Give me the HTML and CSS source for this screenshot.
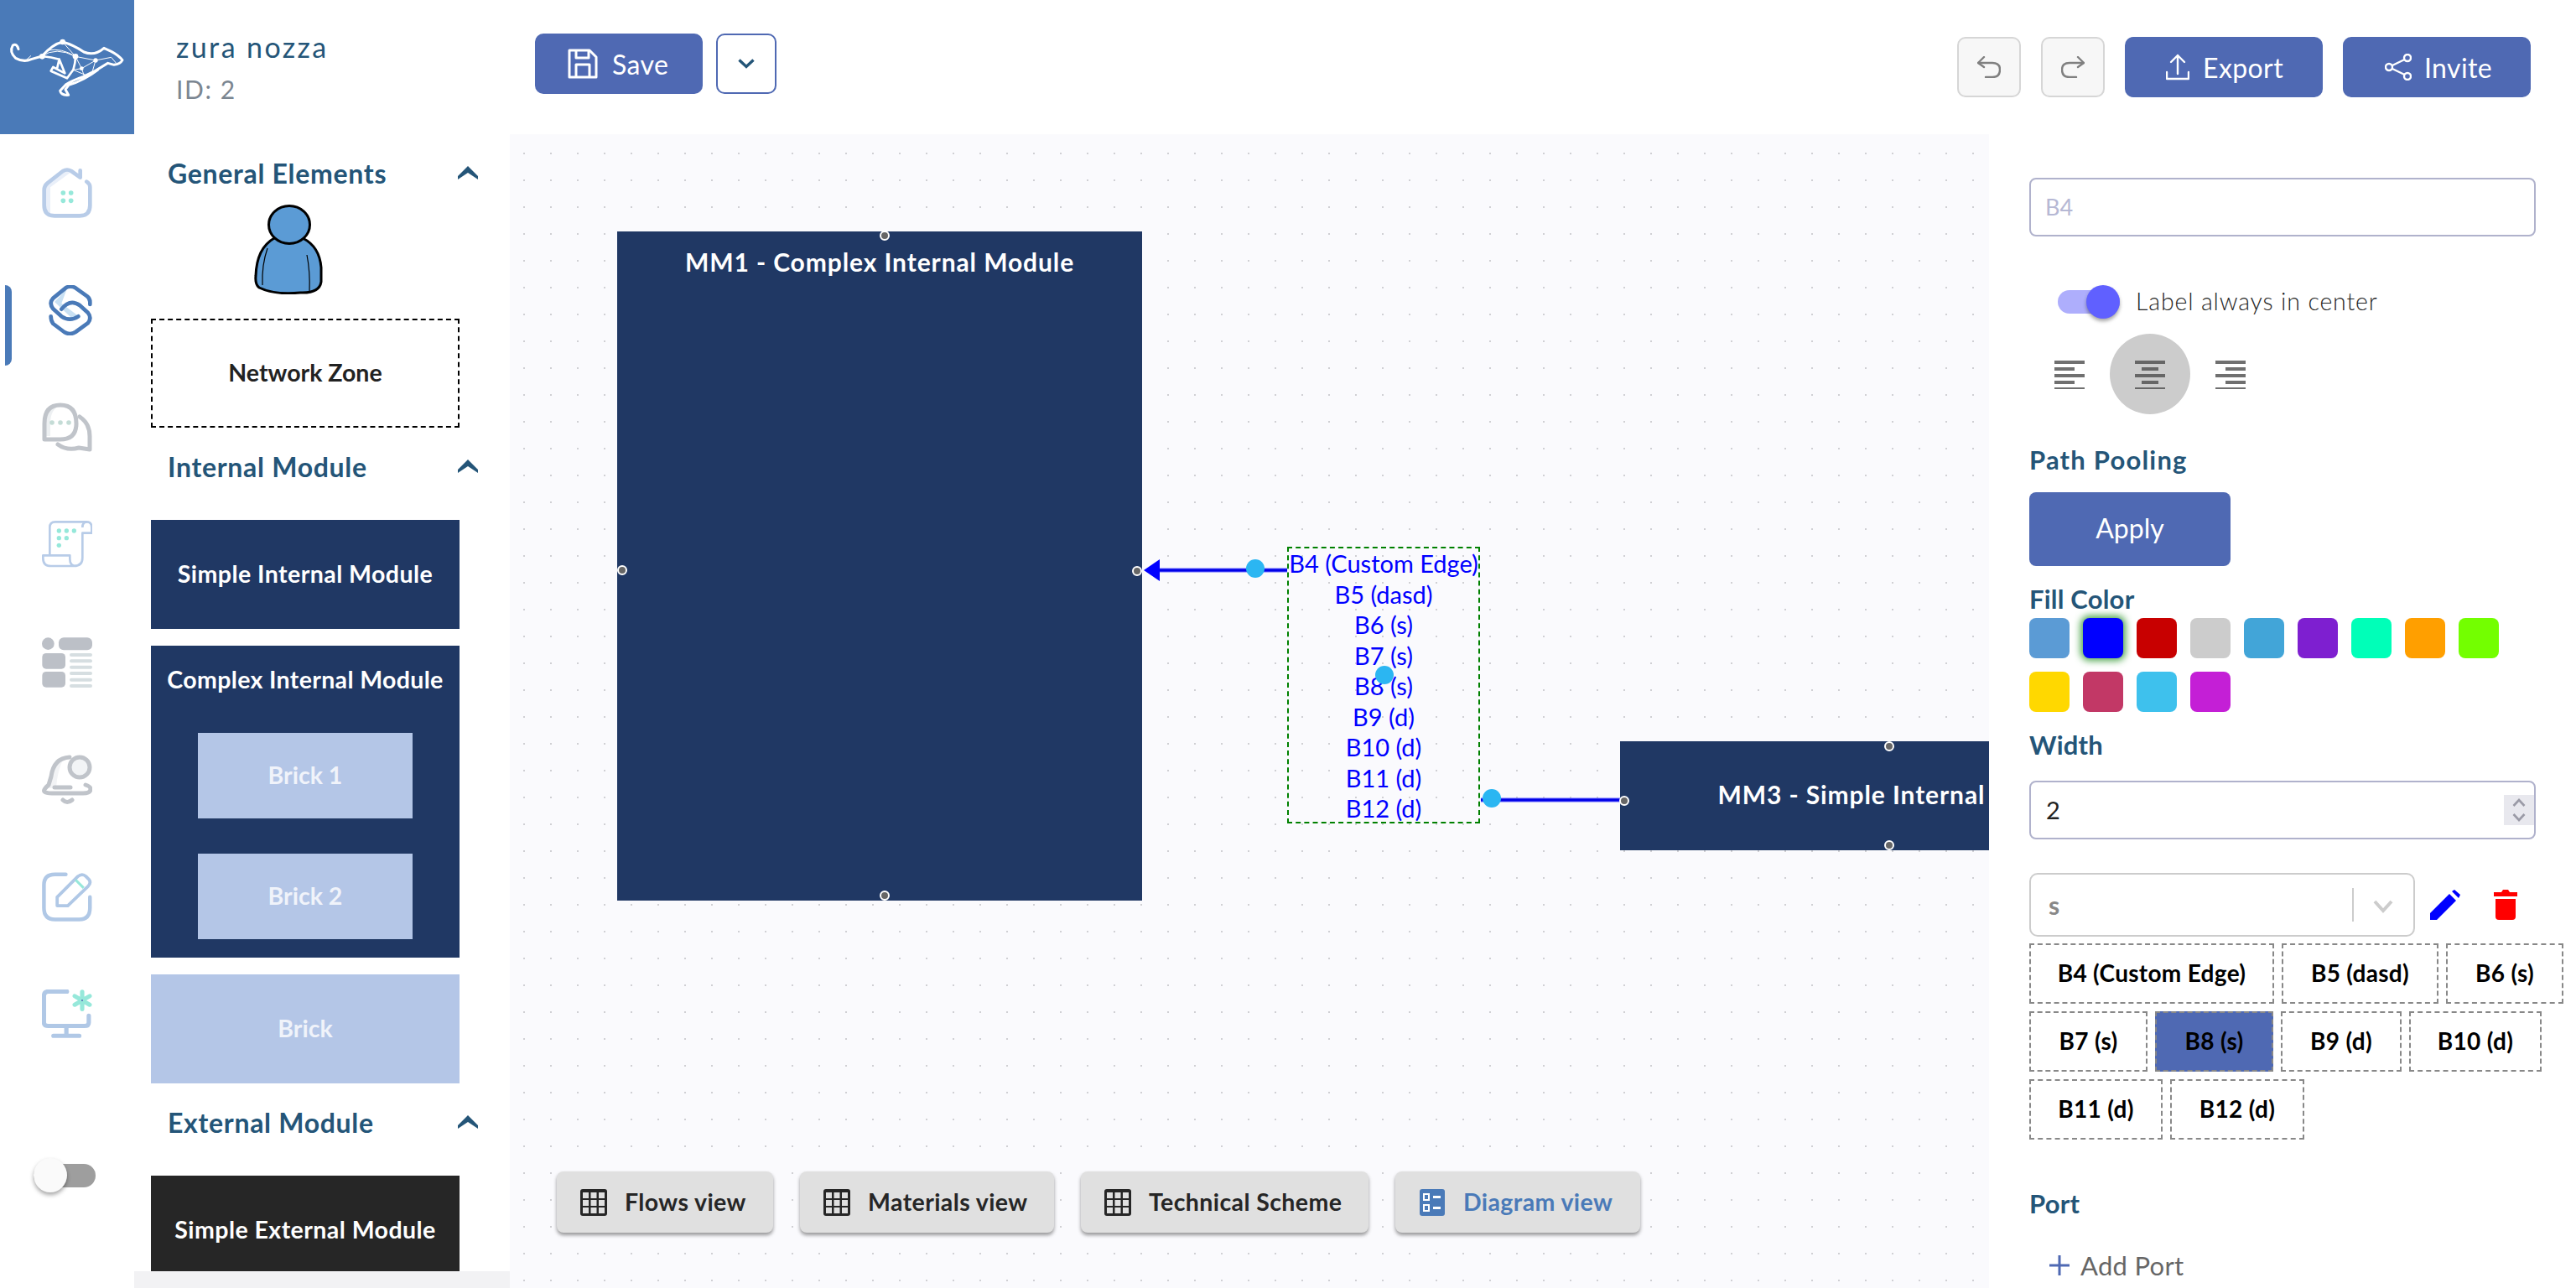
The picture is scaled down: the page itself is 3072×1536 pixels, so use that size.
FILE: index.html
```html
<!DOCTYPE html>
<html lang="en">
<head>
<meta charset="utf-8">
<title>Diagram editor</title>
<link rel="stylesheet" href="styles.css">
</head>
<body>
<div class="app">
  <div class="logo">
    <svg class="logo-svg" viewBox="0 0 480 480" fill="none" stroke="#fff" stroke-linecap="round" stroke-linejoin="round">
      <path stroke-width="9" d="M66 176Q60 154 46 162Q32 186 56 208Q84 224 112 212L150 201Q188 158 224 150Q262 160 300 186Q338 202 372 172L398 184Q425 198 438 215Q430 230 408 232L386 226Q345 254 298 274Q258 288 236 302L215 325Q218 342 245 340L234 320L246 304Q300 288 350 250"/>
      <path stroke-width="8" d="M150 201Q185 205 212 212L232 262L190 240L182 254L240 280L262 250Q270 225 270 202M212 212L205 242"/>
      <path stroke-width="3" d="M150 201Q200 165 270 202L342 216L292 245L270 202L224 150M342 216L398 205L415 225M292 245L262 250L310 270M292 245L300 268M342 216L330 258M110 200L90 218M172 180Q220 170 270 202"/>
      <g fill="#fff" stroke="none"><circle cx="224" cy="150" r="10"/><circle cx="151" cy="202" r="10"/><circle cx="270" cy="202" r="10"/><circle cx="342" cy="216" r="8"/><circle cx="292" cy="245" r="7"/></g>
    </svg>
  </div>

  <header class="topbar">
    <div class="user">
      <div class="user-name">zura nozza</div>
      <div class="user-id">ID: 2</div>
    </div>
    <div class="save-group">
      <button class="btn btn-save">
        <svg class="ic-save" viewBox="0 0 36 36" fill="none" stroke="#fff" stroke-width="3" stroke-linejoin="round"><path d="M2 2H26L34 10V34H2Z"/><path d="M10 2V11H25V2"/><path d="M10 34V19H26V34"/></svg>
        <span>Save</span>
      </button>
      <button class="btn-more">
        <svg class="ic-down" viewBox="0 0 20 12" fill="none" stroke="#245578" stroke-width="3.4"><path d="M1.5 1.5L10 9.5L18.5 1.5"/></svg>
      </button>
    </div>
    <div class="actions">
      <button class="btn-hist"><svg class="ic-hist" viewBox="0 0 28 26" fill="none" stroke="#808080" stroke-width="2.4" stroke-linecap="round" stroke-linejoin="round"><path d="M8 1L1 8L8 13"/><path d="M1 8H18Q27 8 27 16Q27 25 18 25H10"/></svg></button>
      <button class="btn-hist"><svg class="ic-hist" viewBox="0 0 28 26" fill="none" stroke="#808080" stroke-width="2.4" stroke-linecap="round" stroke-linejoin="round"><path d="M20 1L27 8L20 13"/><path d="M27 8H10Q1 8 1 16Q1 25 10 25H18"/></svg></button>
      <button class="btn btn-export">
        <svg class="ic-export" viewBox="0 0 28 32" fill="none" stroke="#fff" stroke-width="2.4" stroke-linecap="round" stroke-linejoin="round"><path d="M14 24V2M6 10L14 2L22 10"/><path d="M1 22V30H27V22"/></svg>
        <span>Export</span>
      </button>
      <button class="btn btn-invite">
        <svg class="ic-invite" viewBox="0 0 32 32" fill="none" stroke="#fff" stroke-width="2.4"><circle cx="5" cy="16" r="4"/><circle cx="27" cy="5" r="4"/><circle cx="27" cy="27" r="4"/><path d="M9 14L23.5 7M9 18L23.5 25"/></svg>
        <span>Invite</span>
      </button>
    </div>
  </header>

  <nav class="rail">
    <span class="rail-active"></span>
    <svg class="rail-ic" viewBox="60 60 180 180" fill="none" stroke-linecap="round" stroke-linejoin="round">
      <path fill="#e9eff9" stroke="none" d="M70 130L150 66L165 75L90 130V230Q70 225 70 195Z"/>
      <path stroke="#b8cce8" stroke-width="14" d="M197 70V95L165 72Q150 63 135 72L80 115Q68 125 68 140V195Q68 232 105 232H195Q232 232 232 195V130Q232 118 220 110"/>
      <g fill="#96e8da"><circle cx="136" cy="150" r="8.5"/><circle cx="164" cy="150" r="8.5"/><circle cx="136" cy="178" r="8.5"/><circle cx="164" cy="178" r="8.5"/></g>
    </svg>
    <svg class="rail-ic" viewBox="60 480 180 180" fill="none" stroke-linecap="round" stroke-linejoin="round">
      <path fill="#c8e0f3" stroke="none" d="M150 492L105 540L165 596L190 590L130 545Z"/>
      <path stroke="#4a7ab8" stroke-width="14" d="M232 549V540Q232 528 222 520L180 490Q162 480 145 490L100 527Q84 545 100 565L130 592Q160 612 190 592"/>
      <path stroke="#4a7ab8" stroke-width="14" d="M130 566Q160 528 195 552L224 578Q240 598 224 616L180 648Q160 660 140 648L100 618Q92 608 92 592"/>
    </svg>
    <svg class="rail-ic" viewBox="0 0 60 60" fill="none" stroke="#c0c4ca" stroke-width="5" stroke-linecap="round" stroke-linejoin="round">
      <path fill="#edf0f2" stroke="none" d="M3 25Q4 5 22 3Q10 8 10 25V40H3Z"/>
      <path d="M3 44V25Q3 3 22 3Q41 3 41 25Q41 44 22 44H10Q3 44 3 44Z"/>
      <path d="M45 17Q57 25 57 40V56L44 54Q30 58 19 50"/>
      <g fill="#c4dcd6" stroke="none"><circle cx="12" cy="24" r="2.8"/><circle cx="22" cy="24" r="2.8"/><circle cx="32" cy="24" r="2.8"/></g>
    </svg>
    <svg class="rail-ic" viewBox="60 65 180 180" fill="none" stroke="#b8cce8" stroke-width="8" stroke-linejoin="round">
      <path d="M88 192V92Q88 72 108 72H220Q238 72 238 92V112H205V200Q205 230 175 230H92Q64 230 64 202V192H160V205Q160 230 182 230"/>
      <path d="M205 92Q205 72 222 72"/>
      <g fill="#96e8da" stroke="none"><circle cx="121" cy="104" r="8"/><circle cx="148" cy="104" r="8"/><circle cx="175" cy="104" r="8"/><circle cx="121" cy="130" r="8"/><circle cx="148" cy="130" r="8"/><circle cx="121" cy="156" r="8"/></g>
    </svg>
    <svg class="rail-ic" viewBox="60 480 180 180">
      <g fill="#bcc0c7"><circle cx="82" cy="503" r="22"/><rect x="120" y="481" width="120" height="45" rx="18"/><rect x="61" y="537" width="83" height="56" rx="14"/><rect x="61" y="603" width="83" height="56" rx="14"/></g>
      <g fill="#d6dee1"><rect x="159" y="537" width="81" height="12" rx="6"/><rect x="159" y="559" width="81" height="12" rx="6"/><rect x="159" y="581" width="81" height="12" rx="6"/><rect x="159" y="603" width="81" height="12" rx="6"/><rect x="159" y="626" width="81" height="12" rx="6"/><rect x="159" y="648" width="81" height="12" rx="6"/></g>
    </svg>
    <svg class="rail-ic" viewBox="0 0 60 60" fill="none" stroke="#c0c4ca" stroke-width="5" stroke-linecap="round" stroke-linejoin="round">
      <path fill="#f2f3f5" stroke="none" d="M8 40Q12 8 26 4Q18 20 17 40Z"/>
      <circle cx="45" cy="15" r="12" fill="#f2f4f6"/>
      <path d="M33 3Q14 4 11 26L8 36Q1 42 3 44Q5 46 12 46H49Q58 46 58 41Q58 38 52 36"/>
      <path d="M15 39H34"/>
      <path d="M25 54Q30 59 36 54"/>
    </svg>
    <svg class="rail-ic" viewBox="65 5 175 175" fill="none" stroke="#b0c8e6" stroke-linecap="round" stroke-linejoin="round">
      <path stroke-width="13" d="M148 13H110Q72 13 72 50V130Q72 170 110 170H195Q232 170 232 130V92"/>
      <path stroke-width="11" d="M118 122V92L190 20Q205 8 218 20L228 30Q238 42 225 55L155 122Z"/>
      <path stroke="#96e8da" stroke-width="9" stroke-linecap="butt" d="M182 32L210 60"/>
    </svg>
    <svg class="rail-ic" viewBox="65 425 175 175" fill="none" stroke-linecap="round" stroke-linejoin="round">
      <path stroke="#b0c8e6" stroke-width="15" d="M152 432H88Q72 432 72 448V540Q72 552 88 552H212Q228 552 228 540V516M150 552V585M105 586H195"/>
      <path stroke="#96e8da" stroke-width="15" d="M205 433V493M179 448L231 478M231 448L179 478"/>
      <circle cx="205" cy="463" r="3" fill="#4f69b3"/>
    </svg>
    <div class="rail-toggle"><span class="rail-knob"></span></div>
  </nav>

  <aside class="palette">
    <div class="pal-head pal-head-first"><span>General Elements</span>
      <svg class="ic-up" viewBox="0 0 24 16" fill="#245578"><path d="M12 0L24 12L24 16L12 8L0 16L0 12Z"/></svg></div>
    <svg class="person" viewBox="0 0 82 107" stroke="#000" stroke-linejoin="round">
      <path fill="#5b9bd5" stroke-width="3" d="M24 40Q3 52 2 85Q1 95 6 99Q25 108 55 105Q78 106 80 92V75Q78 50 58 40Z"/>
      <path fill="none" stroke-width="1.2" d="M16 52Q9 72 10 96M63 60Q67 80 66 104"/>
      <ellipse cx="42" cy="24" rx="24.500" ry="22.500" fill="#5b9bd5" stroke-width="3"/>
    </svg>
    <div class="mod mod-zone">Network Zone</div>
    <div class="pal-head"><span>Internal Module</span>
      <svg class="ic-up" viewBox="0 0 24 16" fill="#245578"><path d="M12 0L24 12L24 16L12 8L0 16L0 12Z"/></svg></div>
    <div class="mod mod-int mod-first">Simple Internal Module</div>
    <div class="mod-complex">
      <div class="complex-title">Complex Internal Module</div>
      <div class="brick">Brick 1</div>
      <div class="brick">Brick 2</div>
    </div>
    <div class="mod mod-brick">Brick</div>
    <div class="pal-head"><span>External Module</span>
      <svg class="ic-up" viewBox="0 0 24 16" fill="#245578"><path d="M12 0L24 12L24 16L12 8L0 16L0 12Z"/></svg></div>
    <div class="mod mod-ext mod-first">Simple External Module</div>
    <div class="pal-scroll"></div>
  </aside>

  <main class="canvas">
    <div class="node node-mm1"><span class="node-title">MM1 - Complex Internal Module</span></div>
    <div class="node node-mm3"><span>MM3 - Simple Internal Module</span></div>
    <div class="group">
      <span class="g-line">B4 (Custom Edge)</span>
      <span class="g-line">B5 (dasd)</span>
      <span class="g-line">B6 (s)</span>
      <span class="g-line">B7 (s)</span>
      <span class="g-line">B8 (s)</span>
      <span class="g-line">B9 (d)</span>
      <span class="g-line">B10 (d)</span>
      <span class="g-line">B11 (d)</span>
      <span class="g-line">B12 (d)</span>
    </div>
    <svg class="overlay" viewBox="608 160 1764 1376">
      <path d="M1383 680H1535" stroke="#6060ff" stroke-width="5"/>
      <path d="M1383 680H1535" stroke="#0000e6" stroke-width="3"/>
      <path d="M1364 680L1383 667V693Z" fill="#0000ff"/>
      <path d="M1766 954H1932" stroke="#6060ff" stroke-width="5"/>
      <path d="M1766 954H1932" stroke="#0000e6" stroke-width="3"/>
      <g fill="#2bb6f2"><circle cx="1497" cy="678" r="11"/><circle cx="1651" cy="805" r="11"/><circle cx="1779" cy="952" r="11"/></g>
      <g fill="#666" stroke="#fff" stroke-width="2"><circle cx="1055" cy="281" r="5"/><circle cx="742" cy="680" r="5"/><circle cx="1356" cy="681" r="5"/><circle cx="1055" cy="1068" r="5"/><circle cx="1937" cy="955" r="5"/><circle cx="2253" cy="890" r="5"/><circle cx="2253" cy="1008" r="5"/></g>
    </svg>
    <div class="views">
      <button class="view"><svg class="ic-grid" viewBox="0 0 34 34"><rect x="1" y="1" width="32" height="32" rx="3" fill="#262626"/><g fill="#e0e0e0"><rect x="4" y="5" width="7" height="7"/><rect x="13.500" y="5" width="7" height="7"/><rect x="23" y="5" width="7" height="7"/><rect x="4" y="14" width="7" height="7"/><rect x="13.500" y="14" width="7" height="7"/><rect x="23" y="14" width="7" height="7"/><rect x="4" y="23" width="7" height="7"/><rect x="13.500" y="23" width="7" height="7"/><rect x="23" y="23" width="7" height="7"/></g></svg><span>Flows view</span></button>
      <button class="view"><svg class="ic-grid" viewBox="0 0 34 34"><rect x="1" y="1" width="32" height="32" rx="3" fill="#262626"/><g fill="#e0e0e0"><rect x="4" y="5" width="7" height="7"/><rect x="13.500" y="5" width="7" height="7"/><rect x="23" y="5" width="7" height="7"/><rect x="4" y="14" width="7" height="7"/><rect x="13.500" y="14" width="7" height="7"/><rect x="23" y="14" width="7" height="7"/><rect x="4" y="23" width="7" height="7"/><rect x="13.500" y="23" width="7" height="7"/><rect x="23" y="23" width="7" height="7"/></g></svg><span>Materials view</span></button>
      <button class="view"><svg class="ic-grid" viewBox="0 0 34 34"><rect x="1" y="1" width="32" height="32" rx="3" fill="#262626"/><g fill="#e0e0e0"><rect x="4" y="5" width="7" height="7"/><rect x="13.500" y="5" width="7" height="7"/><rect x="23" y="5" width="7" height="7"/><rect x="4" y="14" width="7" height="7"/><rect x="13.500" y="14" width="7" height="7"/><rect x="23" y="14" width="7" height="7"/><rect x="4" y="23" width="7" height="7"/><rect x="13.500" y="23" width="7" height="7"/><rect x="23" y="23" width="7" height="7"/></g></svg><span>Technical Scheme</span></button>
      <button class="view view-active"><svg class="ic-grid" viewBox="0 0 34 34"><rect x="2" y="1" width="30" height="32" rx="3" fill="#4a7ab8"/><g fill="none" stroke="#fff" stroke-width="2"><rect x="7" y="7" width="6" height="7"/><rect x="7" y="20" width="6" height="7"/></g><g fill="#fff"><rect x="18" y="9" width="9" height="3"/><rect x="18" y="22" width="9" height="3"/></g></svg><span>Diagram view</span></button>
    </div>
  </main>

  <aside class="props">
    <div class="field field-name"><span class="placeholder">B4</span></div>
    <div class="switch-row">
      <div class="switch"><span class="switch-knob"></span></div>
      <span class="switch-label">Label always in center</span>
    </div>
    <div class="aligns">
      <span class="align">
        <svg class="ic-align" viewBox="0 0 36 36" fill="#707070"><rect y="2" width="36" height="4"/><rect y="10" width="24" height="4"/><rect y="18" width="36" height="4"/><rect y="26" width="24" height="4"/><rect y="34" width="36" height="2"/></svg>
      </span>
      <span class="align align-on">
        <svg class="ic-align" viewBox="0 0 36 36" fill="#666"><rect y="2" width="36" height="4"/><rect x="8" y="10" width="20" height="4"/><rect y="18" width="36" height="4"/><rect x="8" y="26" width="20" height="4"/><rect y="34" width="36" height="2"/></svg>
      </span>
      <span class="align">
        <svg class="ic-align" viewBox="0 0 36 36" fill="#707070"><rect y="2" width="36" height="4"/><rect x="12" y="10" width="24" height="4"/><rect y="18" width="36" height="4"/><rect x="12" y="26" width="24" height="4"/><rect y="34" width="36" height="2"/></svg>
      </span>
    </div>
    <div class="label label-path">Path Pooling</div>
    <button class="btn-apply">Apply</button>
    <div class="label label-fill">Fill Color</div>
    <div class="swatches">
      <span class="sw sw-1"></span><span class="sw sw-2"></span><span class="sw sw-3"></span><span class="sw sw-4"></span><span class="sw sw-5"></span><span class="sw sw-6"></span><span class="sw sw-7"></span><span class="sw sw-8"></span><span class="sw sw-9"></span><span class="sw sw-10"></span><span class="sw sw-11"></span><span class="sw sw-12"></span><span class="sw sw-13"></span>
    </div>
    <div class="label label-width">Width</div>
    <div class="field field-width">
      <span class="value">2</span>
      <span class="spinner">
        <svg class="ic-spin" viewBox="0 0 16 30" fill="none" stroke="#9a9aa6" stroke-width="2.6"><path d="M1.500 10L8 3L14.500 10M1.500 20L8 27L14.500 20"/></svg>
      </span>
    </div>
    <div class="select-row">
      <div class="select">
        <span class="select-value">s</span>
        <span class="select-sep"></span>
        <svg class="ic-sel" viewBox="0 0 24 16" fill="none" stroke="#ccc" stroke-width="4"><path d="M2 2L12 13L22 2"/></svg>
      </div>
      <svg class="ic-pen" viewBox="0 0 36 36" fill="#0000ff"><path d="M0 28L23 5L31 13L8 36H0Z"/><path d="M26 2L29 0L36 6L34 10Z"/></svg>
      <svg class="ic-trash" viewBox="0 0 28 36" fill="#ff0000"><path d="M0 3H9L11 0H17L19 3H28V8H0Z"/><path d="M2 11H26V32Q26 36 22 36H6Q2 36 2 32Z"/></svg>
    </div>
    <div class="tags">
      <div class="tag-row"><span class="tag t-292">B4 (Custom Edge)</span><span class="tag t-187">B5 (dasd)</span><span class="tag t-140">B6 (s)</span></div>
      <div class="tag-row"><span class="tag t-141">B7 (s)</span><span class="tag t-141 tag-on">B8 (s)</span><span class="tag t-144">B9 (d)</span><span class="tag t-158">B10 (d)</span></div>
      <div class="tag-row"><span class="tag t-159">B11 (d)</span><span class="tag t-160">B12 (d)</span></div>
    </div>
    <div class="label label-port">Port</div>
    <div class="add-port">
      <svg class="ic-plus" viewBox="0 0 24 24" fill="none" stroke="#4f69b3" stroke-width="3"><path d="M12 0V24M0 12H24"/></svg>
      <span>Add Port</span>
    </div>
  </aside>
</div>
</body>
</html>
```

FILE: styles.css
```css
* { box-sizing: border-box; }
html, body { margin: 0; padding: 0; background: #fff; }
body { font-family: "Lato", "Noto Sans", sans-serif; overflow: hidden; }
button { font-family: inherit; border: 0; padding: 0; margin: 0; }

.app {
  display: grid;
  grid-template-columns: 160px 448px 1764px 700px;
  grid-template-rows: 160px 1376px;
  width: 3072px;
  height: 1536px;
  overflow: hidden;
}

.logo { background: #4a7ab8; display: flex; }
.logo-svg { width: 160px; height: 160px; }

.topbar { grid-column: 2 / 5; display: flex; align-items: flex-start; }
.user { width: 478px; padding: 34px 0 0 50px; }
.user-name { font-size: 34px; line-height: 44px; color: #245578; letter-spacing: 2.4px; }
.user-id { font-size: 30px; line-height: 44px; margin-top: 6px; color: #7b8691; letter-spacing: 1.6px; }

.save-group { display: flex; gap: 16px; padding-top: 40px; }
.btn {
  display: flex; align-items: center; height: 72px; border-radius: 10px;
  background: #4f69b3; color: #fff; font-size: 32px; letter-spacing: .4px;
}
.btn-save { width: 200px; padding-left: 39px; gap: 17px; }
.ic-save { width: 36px; height: 36px; }
.btn-more {
  width: 72px; height: 72px; border: 2px solid #4f69b3; border-radius: 10px; background: #fff;
  display: flex; align-items: center; justify-content: center;
}
.ic-down { width: 20px; height: 12px; }

.actions { margin-left: auto; display: flex; gap: 24px; padding: 44px 54px 0 0; }
.btn-hist {
  width: 76px; height: 72px; border: 2px solid #d6d6d6; border-radius: 10px; background: #f7f7f7;
  display: flex; align-items: center; justify-content: center;
}
.ic-hist { width: 28px; height: 26px; }
.btn-export { width: 236px; padding-left: 49px; gap: 16px; }
.ic-export { width: 28px; height: 32px; }
.btn-invite { width: 224px; padding-left: 50px; gap: 15px; }
.ic-invite { width: 32px; height: 32px; }

.rail { position: relative; display: flex; flex-direction: column; align-items: center; gap: 80px; padding: 40px 0 114px; }
.rail-active { position: absolute; left: 6px; top: 180px; width: 8px; height: 96px; background: #4a7ab8; border-radius: 0 8px 8px 0; }
.rail-ic { width: 60px; height: 60px; flex: none; }
.rail-toggle { position: relative; margin: auto 6px 6px 0; width: 74px; height: 28px; background: #9e9e9e; border-radius: 14px; }
.rail-knob { position: absolute; left: 0; top: -7px; width: 40px; height: 41px; border-radius: 50%; background: #fafafa; box-shadow: 0 3px 5px rgba(0,0,0,.35); }

.palette { position: relative; display: flex; flex-direction: column; align-items: flex-start; padding-left: 20px; overflow: hidden; }
.pal-head {
  width: 390px; height: 40px; margin-top: 26px; padding-left: 20px;
  display: flex; align-items: center; justify-content: space-between;
  font-size: 32px; font-weight: 700; color: #245578; flex: none; letter-spacing: .7px;
}
.ic-up { width: 24px; height: 16px; }
.person { width: 82px; height: 107px; margin: 18px 0 0 123px; flex: none; }
.mod {
  width: 368px; display: flex; align-items: center; justify-content: center; flex: none;
  font-size: 28.500px; font-weight: 700; padding-bottom: 2px; letter-spacing: .45px;
}
.mod-zone { height: 130px; margin-top: 29px; border: 2px dashed #000; color: #222; letter-spacing: 0; }
.mod-first { margin-top: 44px; }
.mod-int { height: 130px; background: #203864; color: #fff; }
.mod-complex {
  width: 368px; height: 372px; margin-top: 20px; background: #203864; flex: none;
  display: flex; flex-direction: column; align-items: center;
}
.complex-title { height: 40px; margin-top: 20px; font-size: 28.500px; line-height: 40px; font-weight: 700; color: #fff; letter-spacing: .35px; }
.brick {
  width: 256px; height: 102px; margin-top: 42px; background: #b4c6e7; color: #f0f3fa; padding-bottom: 2px;
  display: flex; align-items: center; justify-content: center; font-size: 28.500px; font-weight: 700;
}
.complex-title + .brick { margin-top: 44px; }
.mod-brick { height: 130px; margin-top: 20px; background: #b4c6e7; color: #f0f3fa; letter-spacing: 0; }
.mod-ext { height: 130px; background: #262626; color: #fff; }
.pal-scroll { position: absolute; left: 0; right: 0; bottom: 0; height: 20px; background: #f2f2f4; }

.canvas {
  position: relative; overflow: hidden;
  background-color: #fafafd;
  background-image: radial-gradient(circle, #d0d0d4 .8px, transparent 1px);
  background-size: 32px 32px;
  background-position: 1px 7px;
}
.overlay { position: absolute; left: 0; top: 0; width: 1764px; height: 1376px; }
.node { position: absolute; background: #203864; color: #fff; font-size: 30px; font-weight: 700; letter-spacing: .9px; display: flex; justify-content: center; }
.node-mm1 { left: 128px; top: 116px; width: 626px; height: 798px; padding-top: 18px; }
.node-mm3 { left: 1324px; top: 724px; width: 668px; height: 130px; align-items: center; padding-bottom: 4px; white-space: nowrap; }
.group {
  position: absolute; left: 927px; top: 492px; width: 230px; height: 330px;
  border: 2px dashed #008000; display: flex; flex-direction: column; align-items: center;
}
.g-line { height: 36.500px; line-height: 36.500px; font-size: 29px; color: #0000ff; white-space: nowrap; }
.views { position: absolute; left: 56px; top: 1237px; display: grid; grid-template-columns: 258px 303px 343px 292px; gap: 32px; }
.view {
  height: 73px; display: flex; align-items: center; gap: 20px; padding: 0 0 2px 27px;
  background: #e0e0e0; border-radius: 8px; box-shadow: 0 3px 4px rgba(0,0,0,.4);
  font-size: 28.500px; font-weight: 700; letter-spacing: .4px; color: #262626;
}
.ic-grid { width: 34px; height: 34px; flex: none; margin-top: 2px; }
.view-active { color: #4a7ab8; }

.props { display: flex; flex-direction: column; align-items: flex-start; padding: 52px 0 0 48px; overflow: hidden; }
.field { border: 2px solid #b0b2cc; border-radius: 8px; display: flex; align-items: center; flex: none; background: #fff; padding-bottom: 2px; }
.field-name { width: 604px; height: 70px; padding-left: 17px; }
.placeholder { font-size: 27px; color: #b6b8d4; }
.switch-row { display: flex; align-items: center; margin: 58px 0 0 34px; height: 40px; flex: none; }
.switch { position: relative; width: 74px; height: 28px; background: #aeaefc; border-radius: 14px; }
.switch-knob { position: absolute; right: 0; top: -6px; width: 40px; height: 40px; border-radius: 50%; background: #6060ff; box-shadow: 0 3px 4px rgba(0,0,0,.35); }
.switch-label { margin: 0 0 3px 19px; font-size: 28.500px; font-weight: 300; color: #1f1f1f; white-space: nowrap; letter-spacing: .85px; }
.aligns { display: flex; margin-top: 18px; flex: none; }
.align { width: 96px; height: 96px; border-radius: 50%; display: flex; align-items: center; justify-content: center; }
.align-on { background: #ccc; }
.ic-align { width: 36px; height: 36px; }
.label { height: 40px; line-height: 40px; font-size: 31px; font-weight: 700; color: #245578; flex: none; letter-spacing: .2px; }
.label-path { margin-top: 34px; letter-spacing: 1.2px; }
.btn-apply { width: 240px; height: 88px; margin-top: 19px; padding-bottom: 3px; background: #4f69b3; color: #fff; border-radius: 8px; font-size: 32px; flex: none; }
.label-fill { margin-top: 19px; }
.swatches { display: grid; grid-template-columns: repeat(9, 48px); gap: 16px; margin-top: 3px; flex: none; }
.sw { width: 48px; height: 48px; border-radius: 8px; }
.sw-1 { background: #5b9bd5; }
.sw-2 { background: #0000ff; box-shadow: 0 0 8px 3px #4fa64f; }
.sw-3 { background: #c80000; }
.sw-4 { background: #cccccc; }
.sw-5 { background: #42a5d8; }
.sw-6 { background: #7e1fd0; }
.sw-7 { background: #00ffb8; }
.sw-8 { background: #ff9f00; }
.sw-9 { background: #73ff00; }
.sw-10 { background: #ffd800; }
.sw-11 { background: #c23866; }
.sw-12 { background: #3ec1ed; }
.sw-13 { background: #c41fd6; }
.label-width { margin-top: 19px; }
.field-width { position: relative; width: 604px; height: 70px; margin-top: 23px; padding-left: 18px; }
.value { font-size: 29px; color: #222; }
.spinner { position: absolute; right: 0; top: 15px; width: 36px; height: 36px; background: #e8e8ee; display: flex; align-items: center; justify-content: center; }
.ic-spin { width: 16px; height: 30px; }
.select-row { display: flex; align-items: center; margin-top: 40px; flex: none; }
.select { position: relative; width: 460px; height: 76px; border: 2px solid #ccc; border-radius: 10px; display: flex; align-items: center; padding-left: 21px; }
.select-value { font-size: 30px; font-weight: 700; color: #888; }
.select-sep { position: absolute; left: 383px; top: 16px; width: 2px; height: 40px; background: #ccc; }
.ic-sel { position: absolute; left: 408px; top: 30px; width: 24px; height: 16px; }
.ic-pen { width: 36px; height: 36px; margin-left: 18px; }
.ic-trash { width: 28px; height: 36px; margin-left: 40px; }
.tags { display: flex; flex-direction: column; gap: 9px; margin-top: 8px; flex: none; }
.tag-row { display: flex; gap: 9px; }
.tag {
  height: 72px; border: 2px dashed #888; color: #000; font-size: 28px; font-weight: 700; letter-spacing: .3px; padding-bottom: 2px;
  display: flex; align-items: center; justify-content: center; white-space: nowrap;
}
.tag-on { background: #4f69b3; }
.t-292 { width: 292px; }
.t-187 { width: 187px; }
.t-140 { width: 140px; }
.t-141 { width: 141px; }
.t-144 { width: 144px; }
.t-158 { width: 158px; }
.t-159 { width: 159px; }
.t-160 { width: 160px; }
.label-port { margin-top: 56px; }
.add-port { display: flex; align-items: center; gap: 13px; height: 40px; margin: 34px 0 0 24px; font-size: 31px; letter-spacing: .3px; color: #666; flex: none; }
.ic-plus { width: 24px; height: 24px; }
```
